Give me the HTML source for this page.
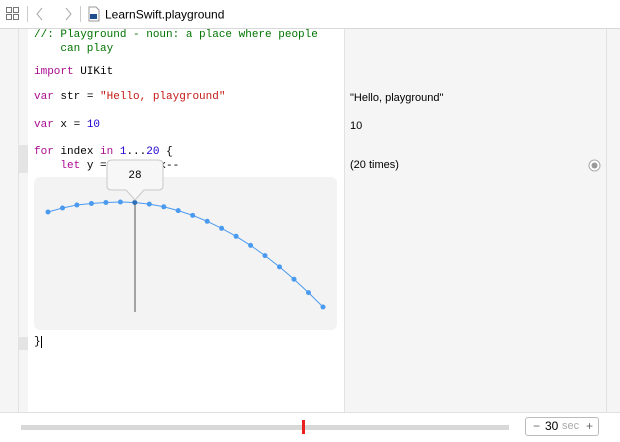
<!DOCTYPE html>
<html><head><meta charset="utf-8"><style>
body{margin:0;width:620px;height:441px;overflow:hidden;background:#fff;font-family:"Liberation Sans",sans-serif;position:relative}
.a{position:absolute}
.code{font-family:"Liberation Mono",monospace;font-size:11px;white-space:pre;color:#000}
.k{color:#aa0d91}.s{color:#c41a16}.n{color:#1c00cf}.c{color:#007400}
.r{font-size:11px;color:#000}
</style></head><body>
<div class="a" style="left:0;top:0;width:620px;height:28px;background:#fff;border-bottom:1px solid #d8d8d8"></div>
<svg class="a" style="left:0;top:0" width="260" height="28">
<g fill="none" stroke="#777" stroke-width="1">
<rect x="6.5" y="7.5" width="5" height="5"/><rect x="13.5" y="7.5" width="5" height="5"/><rect x="6.5" y="14.5" width="5" height="5"/><rect x="13.5" y="14.5" width="5" height="5"/>
<path d="M42 8 L37 14 L42 20" stroke="#aaa"/><path d="M66 8 L71 14 L66 20" stroke="#aaa"/>
</g>
<line x1="27.5" y1="6" x2="27.5" y2="22" stroke="#ccc"/><line x1="80.5" y1="6" x2="80.5" y2="22" stroke="#ccc"/>
<path d="M89 7h7l3 3v11h-10z" fill="#fff" stroke="#999"/><rect x="90" y="14" width="7" height="5" fill="#1f4f8f"/>
<text x="105" y="18.5" font-family="Liberation Sans" font-size="12" fill="#000">LearnSwift.playground</text>
</svg>
<div class="a" style="left:0;top:29px;width:18px;height:383px;background:#f5f5f5;border-right:1px solid #e2e2e2"></div>
<div class="a" style="left:19px;top:29px;width:9px;height:383px;background:#f5f5f5"></div>
<div class="a" style="left:19px;top:145px;width:9px;height:28px;background:#e4e4e4"></div>
<div class="a" style="left:19px;top:337px;width:9px;height:13px;background:#e4e4e4"></div>
<div class="a" style="left:344px;top:29px;width:261px;height:383px;background:#f5f5f5;border-left:1px solid #e2e2e2;border-right:1px solid #e2e2e2"></div>
<div class="a" style="left:607px;top:29px;width:13px;height:383px;background:#f5f5f5"></div>
<div class="a code" style="left:34px;top:28px;line-height:14px"><span class="c">//: Playground - noun: a place where people
    can play</span></div>
<div class="a code" style="left:34px;top:66px"><span class="k">import</span> UIKit</div>
<div class="a code" style="left:34px;top:91px"><span class="k">var</span> str = <span class="s">"Hello, playground"</span></div>
<div class="a code" style="left:34px;top:119px"><span class="k">var</span> x = <span class="n">10</span></div>
<div class="a code" style="left:34px;top:145px;line-height:14px"><span class="k">for</span> index <span class="k">in</span> <span class="n">1</span>...<span class="n">20</span> {
    <span class="k">let</span> y = x * x  x--</div>
<div class="a code" style="left:34px;top:336px">}<span style="border-left:1px solid #000;margin-left:0"></span></div>
<div class="a r" style="left:350px;top:92px">"Hello, playground"</div>
<div class="a r" style="left:350px;top:120px">10</div>
<div class="a r" style="left:350px;top:159px">(20 times)</div>
<svg class="a" style="left:587px;top:158px" width="15" height="15"><circle cx="7.5" cy="7.5" r="5.5" fill="#fff" stroke="#aaa"/><circle cx="7.5" cy="7.5" r="3" fill="#999"/></svg>
<div class="a" style="left:34px;top:177px;width:303px;height:153px;background:#f3f3f3;border-radius:6px"></div>
<svg class="a" style="left:0;top:0" width="344" height="341">
<line x1="135" y1="202" x2="135" y2="312" stroke="#555" stroke-width="1"/>
<polyline fill="none" stroke="#4a9af0" stroke-width="1" points="48,212 62.5,208 76.9,205 91.4,203.5 105.9,202.5 120.4,202 134.8,202.5 149.3,204.1 163.8,206.8 178.2,210.6 192.7,215.4 207.2,221.3 221.6,228.3 236.1,236.3 250.6,245.4 265,255.6 279.5,266.9 294,279.2 308.5,292.6 323,307"/>
<g fill="#4a9af0">
<circle cx="48" cy="212" r="2.5"/><circle cx="62.5" cy="208" r="2.5"/><circle cx="76.9" cy="205" r="2.5"/><circle cx="91.4" cy="203.5" r="2.5"/><circle cx="105.9" cy="202.5" r="2.5"/><circle cx="120.4" cy="202" r="2.5"/><circle cx="134.8" cy="202.5" r="2.5" fill="#2f6fb8"/><circle cx="149.3" cy="204.1" r="2.5"/><circle cx="163.8" cy="206.8" r="2.5"/><circle cx="178.2" cy="210.6" r="2.5"/><circle cx="192.7" cy="215.4" r="2.5"/><circle cx="207.2" cy="221.3" r="2.5"/><circle cx="221.6" cy="228.3" r="2.5"/><circle cx="236.1" cy="236.3" r="2.5"/><circle cx="250.6" cy="245.4" r="2.5"/><circle cx="265" cy="255.6" r="2.5"/><circle cx="279.5" cy="266.9" r="2.5"/><circle cx="294" cy="279.2" r="2.5"/><circle cx="308.5" cy="292.6" r="2.5"/><circle cx="323" cy="307" r="2.5"/>
</g>
<path d="M112 160 H158 Q163 160 163 165 V186 Q163 190 158 190 H144 L135 200 L126 190 H112 Q107 190 107 186 V165 Q107 160 112 160 Z" fill="#f7f7f7" stroke="#c8c8c8"/>
<text x="135" y="178" text-anchor="middle" font-family="Liberation Mono" font-size="11" fill="#000">28</text>
</svg>
<div class="a" style="left:0;top:412px;width:620px;height:29px;background:#fff;border-top:1px solid #e0e0e0"></div>
<div class="a" style="left:21px;top:425px;width:488px;height:5px;background:#d8d8d8"></div>
<div class="a" style="left:302px;top:420px;width:3px;height:14px;background:#e8211f"></div>
<div class="a" style="left:525px;top:417px;width:72px;height:17px;border:1px solid #bbb;border-radius:3px;font-size:12px;line-height:17px;color:#000">
<span style="position:absolute;left:7px;color:#666">−</span><span style="position:absolute;left:19px">30</span><span style="position:absolute;left:36px;color:#aaa;font-size:11px">sec</span><span style="position:absolute;left:60px;color:#666">+</span></div>
</body></html>
